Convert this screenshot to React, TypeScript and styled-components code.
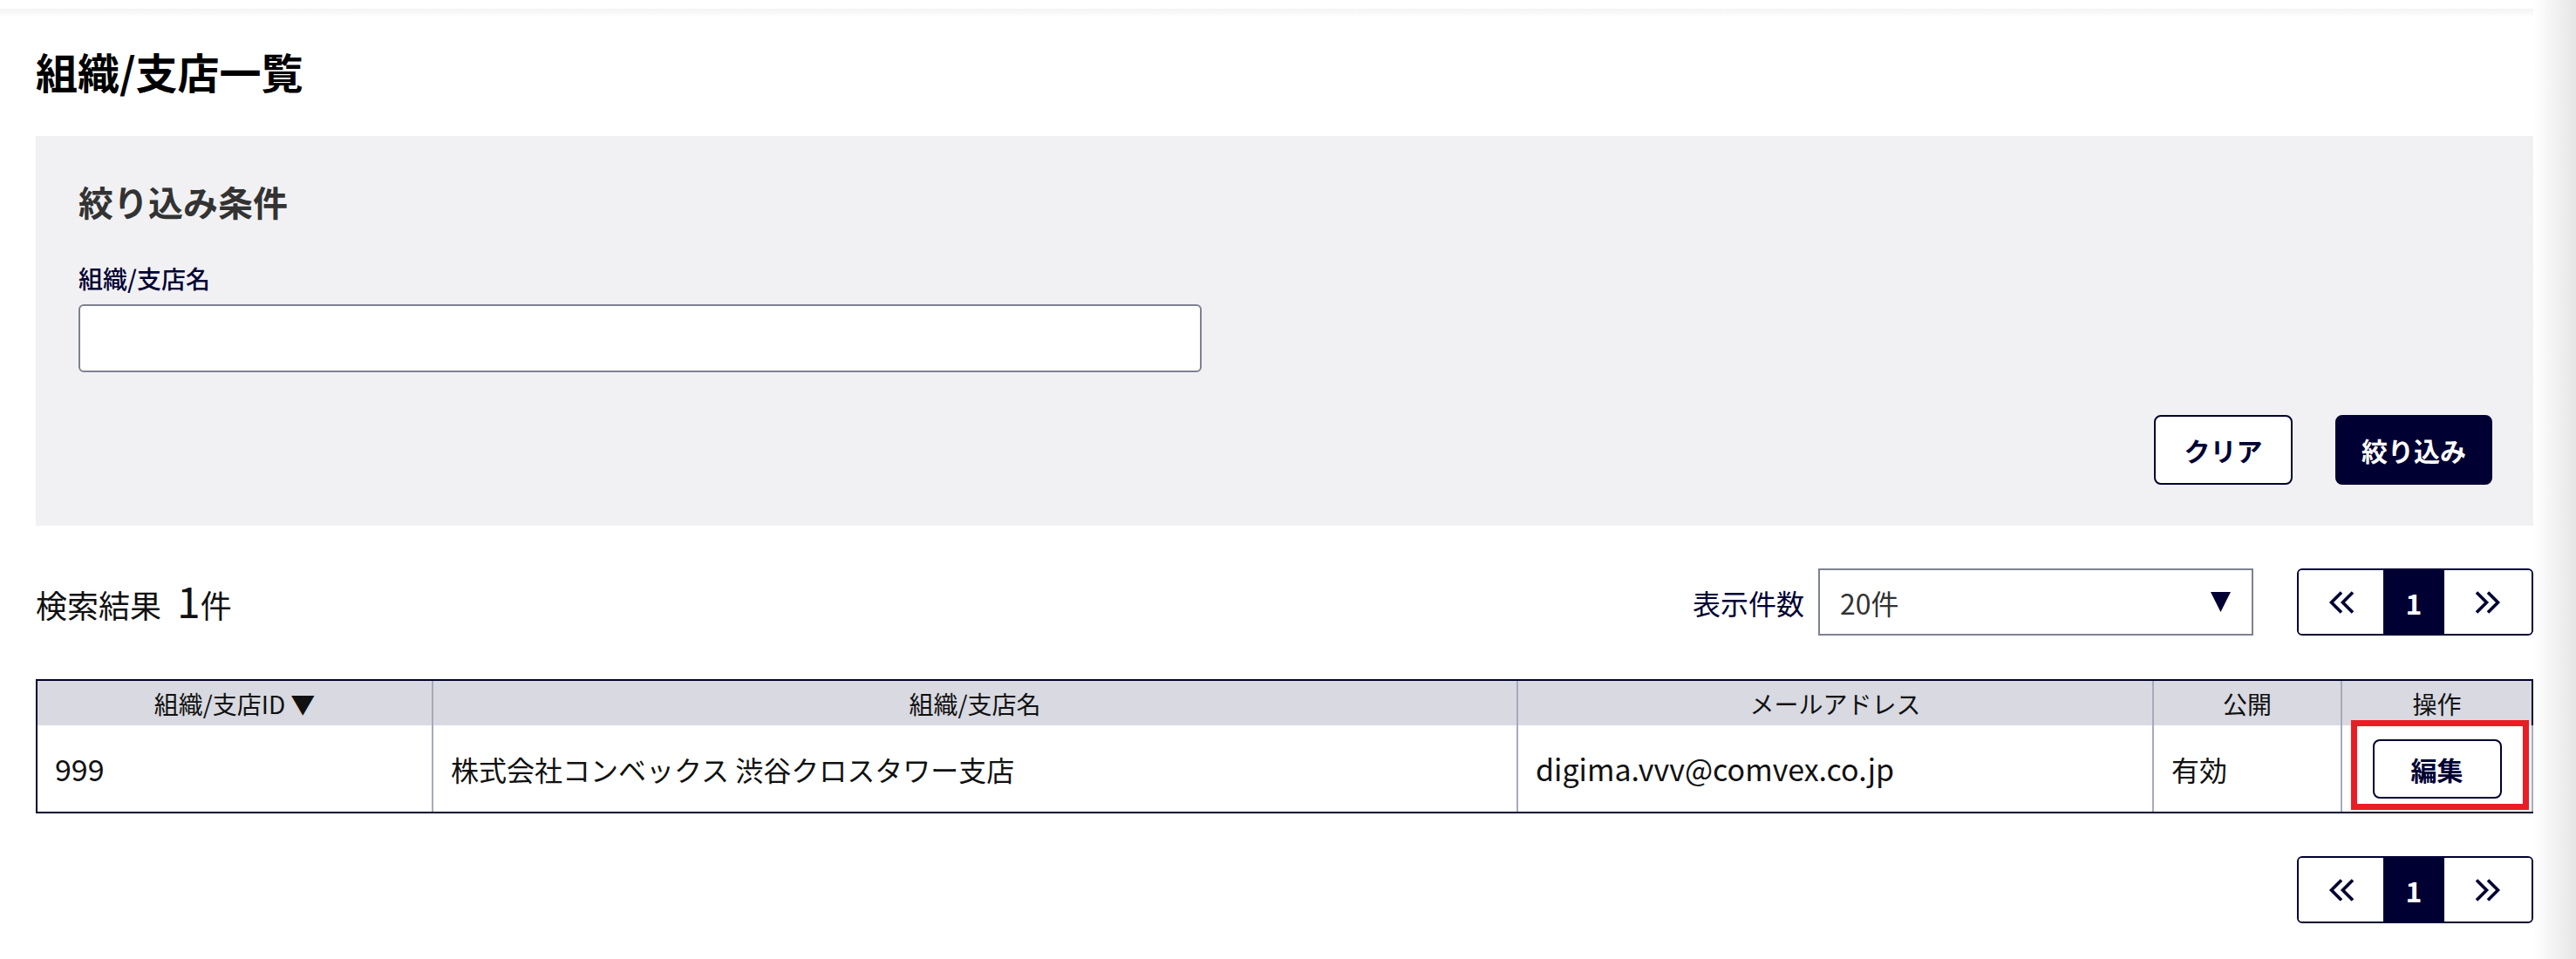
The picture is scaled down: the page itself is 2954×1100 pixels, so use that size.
import React from 'react';
import styled, { createGlobalStyle } from 'styled-components';

const NAVY = '#000033';
const GRID_GREY = '#a8aabb';

const GlobalStyle = createGlobalStyle`
  * { box-sizing: border-box; }
  html, body {
    margin: 0;
    padding: 0;
    background: #ffffff;
    font-family: "Noto Sans CJK JP", "Noto Sans", sans-serif;
    color: #111111;
  }
`;

const Page = styled.div`
  display: flex;
  min-height: 1100px;
  width: 2954px;
`;

const Main = styled.main`
  flex: 1;
  display: flex;
  flex-direction: column;
  padding: 0 0 40px 41px;
`;

const RightShade = styled.div`
  width: 49px;
  flex-shrink: 0;
  background: linear-gradient(to right, #ffffff, #e6e6e6);
`;

const TopShadow = styled.div`
  height: 20px;
  margin-left: -41px;
  background: linear-gradient(to bottom, #ffffff 0, #ffffff 10px, #f3f3f3 10px, #ffffff 20px);
`;

const PageTitle = styled.h1`
  margin: 28px 0 0 0;
  font-size: 48px;
  line-height: 67px;
  font-weight: 700;
  color: #000000;
`;

const FilterPanel = styled.section`
  margin-top: 41px;
  background: #f1f1f3;
  padding: 51px 47px 47px 49px;
  display: flex;
  flex-direction: column;
`;

const PanelTitle = styled.h2`
  margin: 0;
  font-size: 40px;
  line-height: 48px;
  font-weight: 700;
  color: #333333;
`;

const FieldLabel = styled.label`
  margin-top: 45px;
  font-size: 28px;
  line-height: 38px;
  font-weight: 500;
  color: ${NAVY};
`;

const TextInput = styled.input`
  margin-top: 11px;
  width: 1288px;
  height: 78px;
  border: 2px solid #7e8192;
  border-radius: 6px;
  background: #ffffff;
  font-size: 32px;
  padding: 0 20px;
  font-family: inherit;
`;

const ButtonRow = styled.div`
  margin-top: 49px;
  display: flex;
  justify-content: flex-end;
  gap: 49px;
`;

const Button = styled.button<{ $primary?: boolean; $width: number }>`
  width: ${({ $width }) => $width}px;
  height: 80px;
  border: 2px solid ${NAVY};
  border-radius: 8px;
  background: ${({ $primary }) => ($primary ? NAVY : '#ffffff')};
  color: ${({ $primary }) => ($primary ? '#ffffff' : NAVY)};
  font-family: inherit;
  font-size: 30px;
  font-weight: 700;
  cursor: pointer;
`;

const ResultBar = styled.div`
  margin-top: 49px;
  height: 77px;
  display: flex;
  align-items: center;
  justify-content: space-between;
`;

const ResultCount = styled.div`
  font-size: 36px;
  line-height: 48px;
  color: #111111;
`;

const CountNumber = styled.span`
  font-size: 48px;
  margin-left: 18px;
`;

const ResultControls = styled.div`
  display: flex;
  align-items: center;
`;

const PerPageLabel = styled.span`
  font-size: 32px;
  color: ${NAVY};
  margin-right: 16px;
`;

const SelectBox = styled.div`
  width: 499px;
  height: 77px;
  border: 2px solid #7e8192;
  background: #ffffff;
  display: flex;
  align-items: center;
  justify-content: space-between;
  padding: 0 24px 0 23px;
  font-size: 32px;
  color: #333333;
  margin-right: 50px;
`;

const Pager = styled.nav`
  display: flex;
  height: 77px;
  border: 2px solid ${NAVY};
  border-radius: 6px;
  overflow: hidden;
  background: #ffffff;
`;

const PagerCell = styled.div<{ $active?: boolean; $width: number }>`
  width: ${({ $width }) => $width}px;
  display: flex;
  align-items: center;
  justify-content: center;
  background: ${({ $active }) => ($active ? NAVY : '#ffffff')};
  color: ${({ $active }) => ($active ? '#ffffff' : NAVY)};
  font-size: 32px;
  font-weight: 700;
`;

const BottomPager = styled.div`
  margin-top: 49px;
  display: flex;
  justify-content: flex-end;
`;

const Table = styled.div`
  margin-top: 50px;
  border-top: 2px solid ${NAVY};
  border-left: 2px solid ${NAVY};
  border-bottom: 2px solid ${NAVY};
`;

const Row = styled.div<{ $head?: boolean }>`
  display: grid;
  grid-template-columns: 452px 1244px 729px 216px 1fr;
  height: ${({ $head }) => ($head ? 51 : 99)}px;
  background: ${({ $head }) => ($head ? '#d8d9e1' : '#ffffff')};
`;

const HeadCell = styled.div`
  display: flex;
  align-items: center;
  justify-content: center;
  gap: 6px;
  font-size: 28px;
  color: #111111;
  & + & { border-left: 2px solid ${GRID_GREY}; }
  &:last-child { border-right: 2px solid ${NAVY}; }
`;

const BodyCell = styled.div<{ $center?: boolean; $latin?: boolean }>`
  position: relative;
  display: flex;
  align-items: center;
  justify-content: ${({ $center }) => ($center ? 'center' : 'flex-start')};
  padding: 0 20px;
  font-size: ${({ $latin }) => ($latin ? 34 : 32)}px;
  color: #111111;
  & + & { border-left: 2px solid ${GRID_GREY}; }
  &:last-child { border-right: 2px solid ${GRID_GREY}; }
`;

const Highlight = styled.div`
  position: absolute;
  top: -6px;
  left: 10px;
  right: 3px;
  bottom: 2px;
  border: 7px solid #ec1c24;
  pointer-events: none;
`;

const EditButton = styled.button`
  width: 148px;
  height: 68px;
  border: 2px solid ${NAVY};
  border-radius: 8px;
  background: #ffffff;
  color: ${NAVY};
  font-family: inherit;
  font-size: 30px;
  font-weight: 700;
`;

const Chevrons = ({ dir }: { dir: 'left' | 'right' }) => (
  <svg width="30" height="26" viewBox="0 0 30 26" fill="none">
    <path
      d={dir === 'left' ? 'M15 1.5 L3.5 13 L15 24.5 M28 1.5 L16.5 13 L28 24.5' : 'M2 1.5 L13.5 13 L2 24.5 M15 1.5 L26.5 13 L15 24.5'}
      stroke={NAVY}
      strokeWidth="3.6"
    />
  </svg>
);

const DownTriangle = () => (
  <svg width="23" height="23" viewBox="0 0 23 23">
    <polygon points="0,0 23,0 11.5,23" fill={NAVY} />
  </svg>
);

const Pagination = () => (
  <Pager>
    <PagerCell $width={97}>
      <Chevrons dir="left" />
    </PagerCell>
    <PagerCell $width={70} $active>
      1
    </PagerCell>
    <PagerCell $width={100}>
      <Chevrons dir="right" />
    </PagerCell>
  </Pager>
);

export default function App() {
  return (
    <>
      <GlobalStyle />
      <Page>
        <Main>
          <TopShadow />
          <PageTitle>組織/支店一覧</PageTitle>

          <FilterPanel>
            <PanelTitle>絞り込み条件</PanelTitle>
            <FieldLabel htmlFor="org-name">組織/支店名</FieldLabel>
            <TextInput id="org-name" type="text" />
            <ButtonRow>
              <Button $width={159}>クリア</Button>
              <Button $width={180} $primary>
                絞り込み
              </Button>
            </ButtonRow>
          </FilterPanel>

          <ResultBar>
            <ResultCount>
              検索結果<CountNumber>1</CountNumber>件
            </ResultCount>
            <ResultControls>
              <PerPageLabel>表示件数</PerPageLabel>
              <SelectBox>
                <span>20件</span>
                <DownTriangle />
              </SelectBox>
              <Pagination />
            </ResultControls>
          </ResultBar>

          <Table>
            <Row $head>
              <HeadCell>
                <span>組織/支店ID</span>
                <span>▼</span>
              </HeadCell>
              <HeadCell>組織/支店名</HeadCell>
              <HeadCell>メールアドレス</HeadCell>
              <HeadCell>公開</HeadCell>
              <HeadCell>操作</HeadCell>
            </Row>
            <Row>
              <BodyCell $latin>999</BodyCell>
              <BodyCell>株式会社コンベックス 渋谷クロスタワー支店</BodyCell>
              <BodyCell $latin>digima.vvv@comvex.co.jp</BodyCell>
              <BodyCell>有効</BodyCell>
              <BodyCell $center>
                <EditButton>編集</EditButton>
                <Highlight />
              </BodyCell>
            </Row>
          </Table>

          <BottomPager>
            <Pagination />
          </BottomPager>
        </Main>
        <RightShade />
      </Page>
    </>
  );
}
